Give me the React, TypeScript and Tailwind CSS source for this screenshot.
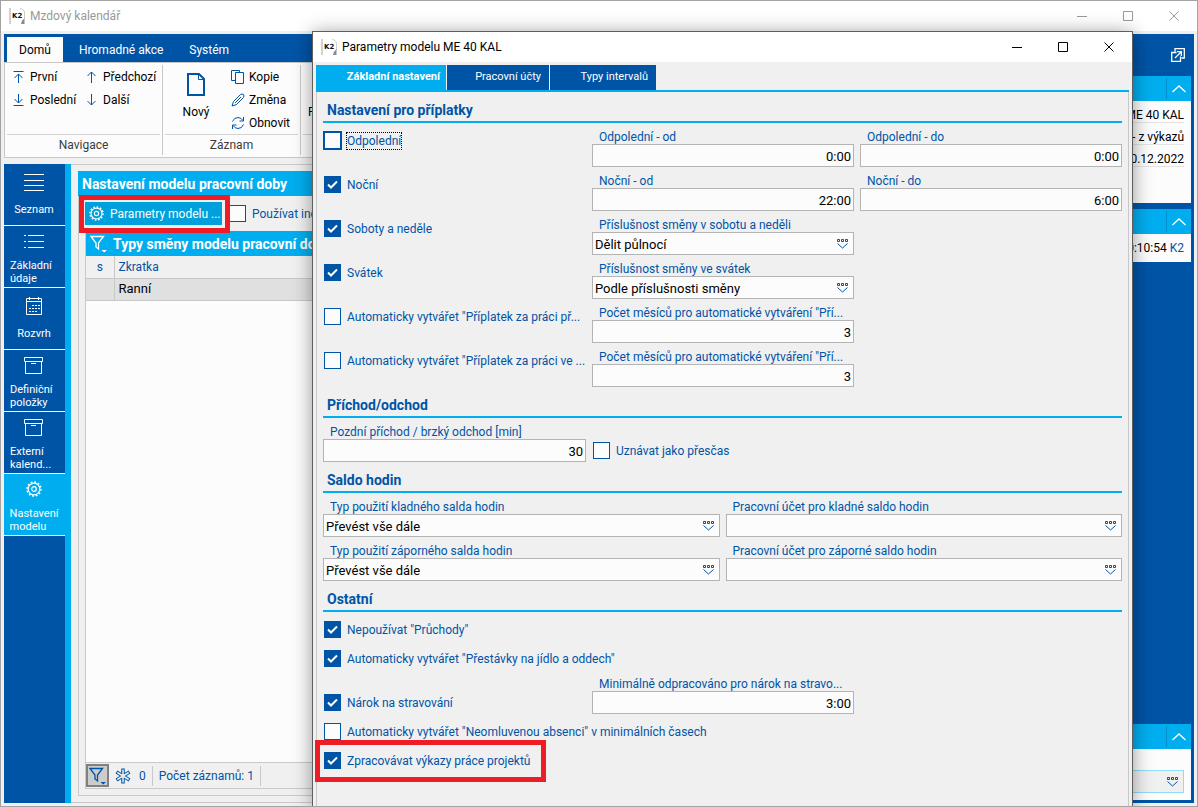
import { useId, useState } from "react";
import type { ReactNode } from "react";

export default function App() {
  return (
    <div className="relative flex min-h-screen flex-col overflow-hidden border border-[#a3a3a3] bg-[#f0f0f0] font-['Roboto','Noto_Sans',sans-serif] text-xs text-[#0054a6]">
      <TitleBar title="Mzdový kalendář" muted />
      <div className="flex flex-1 p-[3px]">
        <div className="flex min-w-0 flex-1 flex-col">
          <Ribbon />
          <div className="mt-1.5 flex flex-1">
            <Sidebar />
            <ModelPanel />
          </div>
        </div>
        <InfoColumn />
      </div>
      <ParametersDialog />
    </div>
  );
}

function TitleBar({ title, muted = false }: { title: string; muted?: boolean }) {
  return (
    <div
      className={`flex h-[30px] shrink-0 items-center bg-white pl-2 ${
        muted ? "text-[#999999]" : "text-black"
      }`}
    >
      <K2Logo />
      <span className="ml-1 flex-1">{title}</span>
      <button aria-label="Minimalizovat" className="flex w-[46px] justify-center">
        <WindowIcon d="M0 5.5H10" />
      </button>
      <button aria-label="Maximalizovat" className="flex w-[46px] justify-center">
        <WindowIcon d="M0.5 0.5H9.5V9.5H0.5Z" />
      </button>
      <button aria-label="Zavřít" className="flex w-[46px] justify-center">
        <WindowIcon d="M0.5 0.5L9.5 9.5M9.5 0.5L0.5 9.5" />
      </button>
    </div>
  );
}

function WindowIcon({ d }: { d: string }) {
  return (
    <svg width="10" height="10" viewBox="0 0 10 10" fill="none" stroke="currentColor">
      <path d={d} />
    </svg>
  );
}

function K2Logo() {
  return (
    <svg className="font-['DejaVu_Sans',sans-serif]" width="17" height="17" viewBox="0 0 17 17">
      <rect x="0" y="0" width="2" height="16" fill="#d2d2d2" />
      <path d="M11 0.5Q15.500 1 15.500 5V11" fill="none" stroke="#cccccc" />
      <path d="M15.500 10V16H12Q12 13 15.500 10Z" fill="#8a8a8a" />
      <text x="3" y="10" fontSize="7" fontWeight="700" fill="#111111">
        K2
      </text>
    </svg>
  );
}

function Ribbon() {
  return (
    <div>
      <div className="flex h-7 items-end bg-[#0054a6] pl-[3px] text-white">
        <button className="h-[25px] w-14 bg-[#fcfcfc] text-black">Domů</button>
        <button className="h-[25px] pr-3.5 pl-4">Hromadné akce</button>
        <button className="h-[25px] px-3">Systém</button>
      </div>
      <div className="flex h-[96px] border border-[#c8c8c8] bg-[#fcfcfc] py-0.5 text-black">
        <RibbonGroup title="Navigace" width="w-[158px]">
          <div className="grid grid-cols-[73px_1fr] content-start gap-y-[3px] pl-[5px]">
            <RibbonButton label="První" icon={<path d="M1.500 1.500H11.500M6.500 13V4M2.500 8L6.500 4L10.500 8" />} />
            <RibbonButton label="Předchozí" icon={<path d="M6.500 13V2M2.500 6L6.500 2L10.500 6" />} />
            <RibbonButton label="Poslední" icon={<path d="M1.500 12.500H11.500M6.500 1V10M2.500 6L6.500 10L10.500 6" />} />
            <RibbonButton label="Další" icon={<path d="M6.500 1V12M2.500 8L6.500 12L10.500 8" />} />
          </div>
        </RibbonGroup>
        <RibbonGroup title="Záznam" width="w-[138px]">
          <div className="flex gap-1">
            <button className="flex w-[62px] flex-col items-center gap-2 pt-1.5">
              <svg width="18" height="23" viewBox="0 0 18 23" fill="none" stroke="#0054a6" strokeWidth="2">
                <path d="M1 1H12L17 6V22H1Z" />
                <path d="M11.500 1V6.500H17" strokeWidth="1" />
              </svg>
              Nový
            </button>
            <div className="flex flex-col gap-[3px]">
              <RibbonButton
                label="Kopie"
                icon={<path d="M4.500 10.500H0.500V0.500H8.500V2.500M4.500 2.500H12.500V13.500H4.500Z" />}
              />
              <RibbonButton
                label="Změna"
                icon={
                  <path d="M1 13L2.500 8.500L9.500 1.500Q11 0.500 12.500 1.500Q13.500 3 12.500 4.500L5.500 11.500ZM4 10L10 4" />
                }
              />
              <RibbonButton
                label="Obnovit"
                icon={
                  <path d="M1.500 5.500Q3 1.500 7 1.500Q10 1.500 12 4.500M12.500 1V5H8.500M12.500 8.500Q11 12.500 7 12.500Q4 12.500 2 9.500M1.500 13V9H5.500" />
                }
              />
            </div>
          </div>
        </RibbonGroup>
        <RibbonGroup title="" width="w-[138px]">
          <span className="block pt-[37px] pl-[5px]">F</span>
        </RibbonGroup>
      </div>
    </div>
  );
}

function RibbonGroup({ title, width, children }: { title: string; width: string; children: ReactNode }) {
  return (
    <div className={`flex flex-col border-r border-[#c8c8c8] px-0.5 ${width}`}>
      <div className="h-[70px] border-b border-[#d4d4d4] pt-0.5">{children}</div>
      <div className="flex flex-1 items-center justify-center text-[#3c3c3c]">{title}</div>
    </div>
  );
}

function RibbonButton({ label, icon }: { label: string; icon: ReactNode }) {
  return (
    <button className="flex h-5 items-center gap-1 whitespace-nowrap">
      <svg width="14" height="14" viewBox="0 0 14 14" fill="none" stroke="#0054a6">
        {icon}
      </svg>
      {label}
    </button>
  );
}

const listIcon = <path d="M0 4.500H20M0 10.500H20M0 15.500H20M0 20.500H20" />;
const detailIcon = <path d="M0 3.500H2M4 3.500H20M0 9.500H2M4 9.500H20M0 15.500H2M4 15.500H20" />;
const calendarIcon = (
  <>
    <path d="M2.500 4.500H17.500V20.500H2.500ZM2.500 7.500H17.500M5.500 3V6M14.500 3V6" />
    <path d="M8 11.500H16M5 14.500H16M5 17.500H13" strokeDasharray="2 1" />
  </>
);
const boxIcon = <path d="M0.500 1.500H18.500V5.500H0.500ZM1.500 5.500V17.500H17.500V5.500M7 7.500H12" />;

const NAV_ITEMS = [
  { label: "Seznam", icon: listIcon },
  { label: "Základní údaje", icon: detailIcon },
  { label: "Rozvrh", icon: calendarIcon },
  { label: "Definiční položky", icon: boxIcon },
  { label: "Externí kalend...", icon: boxIcon },
];

function Sidebar() {
  return (
    <nav className="w-[67px] shrink-0 border-r-6 border-[#00aeef] bg-[#0054a6] text-white">
      {NAV_ITEMS.map((item) => (
        <NavButton key={item.label} label={item.label}>
          <svg
            className="overflow-visible"
            width="20"
            height="18"
            viewBox="0 0 20 18"
            fill="none"
            stroke="currentColor"
          >
            {item.icon}
          </svg>
        </NavButton>
      ))}
      <NavButton label="Nastavení modelu" active>
        <GearIcon size="size-4" />
      </NavButton>
    </nav>
  );
}

function NavButton({ label, active = false, children }: { label: string; active?: boolean; children: ReactNode }) {
  return (
    <button
      className={`flex h-[62px] w-full flex-col items-center border-b border-white pt-1.5 pr-px ${
        active ? "bg-[#00aeef]" : ""
      }`}
    >
      <span className="flex h-[18px] items-center">{children}</span>
      <span className="flex flex-1 items-center px-1.5 pt-1.5 text-left text-[11px] leading-[13px]">{label}</span>
    </button>
  );
}

function GearIcon({ size }: { size: string }) {
  return (
    <svg className={`shrink-0 ${size}`} viewBox="0 0 16 16" fill="none" stroke="currentColor">
      <circle cx="8" cy="8" r="7" strokeWidth="1.500" strokeDasharray="1.800 1.865" />
      <circle cx="8" cy="8" r="5.800" strokeWidth="1.200" />
      <circle cx="8" cy="8" r="2.300" strokeWidth="1.200" />
    </svg>
  );
}

function FunnelIcon() {
  return (
    <svg width="18" height="18" viewBox="0 0 18 18" fill="none" stroke="currentColor" strokeWidth="1.300">
      <path d="M1 1.500H13.500L8.500 8V14L6 12V8Z" />
      <path d="M11.500 15H17L14.200 17.500Z" fill="currentColor" stroke="none" />
    </svg>
  );
}

function ModelPanel() {
  return (
    <section className="flex min-w-0 flex-1 flex-col border-y border-[#c8c8c8] pt-1.5 pb-1.5 pl-[7px]">
      <h2 className="h-[25px] bg-[#00aeef] pl-1 text-sm leading-[26px] font-bold text-white">
        Nastavení modelu pracovní doby
      </h2>
      <div className="flex flex-1 flex-col border-b border-l border-[#c8c8c8] pb-1.5 pl-1.5">
        <div className="flex h-[35px] items-center gap-1.5">
          <div className="relative">
            <button className="flex h-[23px] w-[137px] items-center gap-1.5 bg-[#00a0dc] pl-1 whitespace-nowrap text-white">
              <GearIcon size="size-[15px]" />
              Parametry modelu ...
            </button>
            {/* red frame marks the button that opens the dialog */}
            <div className="pointer-events-none absolute -top-[7px] -left-1.5 z-10 h-[38px] w-[151px] border-5 border-[#ee1c25]" />
          </div>
          <CheckBox label="Používat individuální" />
        </div>
        <div className="flex flex-1 flex-col border-b border-l border-[#c8c8c8]">
          <h3 className="flex h-[25px] items-center gap-[5px] bg-[#00aeef] pl-1 text-sm font-bold text-white">
            <FunnelIcon />
            Typy směny modelu pracovní doby
          </h3>
          <div className="flex-1 bg-[#fcfcfc]">
            <table className="w-full border-collapse text-left">
              <thead>
                <tr className="h-[22px] border-b border-[#c8c8c8] bg-[#f0f0f0]">
                  <th className="w-7 border-r border-[#c8c8c8] text-center font-normal">s</th>
                  <th className="pl-1 font-normal">Zkratka</th>
                </tr>
              </thead>
              <tbody>
                <tr className="h-[22px] border-b border-[#c8c8c8] bg-[#e0e0e0] text-[13px] text-black">
                  <td className="border-r border-[#c8c8c8]" />
                  <td className="pl-1">Ranní</td>
                </tr>
              </tbody>
            </table>
          </div>
          <div className="flex h-[26px] items-center border-t border-[#c8c8c8]">
            <button
              aria-label="Filtr"
              className="grid size-[23px] place-items-center border-2 border-[#808080] bg-[#cccccc]"
            >
              <FunnelIcon />
            </button>
            <div className="flex h-5 items-center gap-2 border-r border-[#c8c8c8] px-1.5">
              <svg width="16" height="16" viewBox="0 0 16 16" fill="none" stroke="currentColor">
                <path d="M8 0.500V15.500M1.500 4L14.500 12M14.500 4L1.500 12" strokeWidth="3.500" />
                <path
                  d="M8 1.500V14.500M2.300 4.500L13.700 11.500M13.700 4.500L2.300 11.500"
                  stroke="#f0f0f0"
                  strokeWidth="1.500"
                />
              </svg>
              0
            </div>
            <span className="flex h-5 items-center border-r border-[#c8c8c8] px-1.5">Počet záznamů: 1</span>
          </div>
        </div>
      </div>
    </section>
  );
}

function InfoColumn() {
  return (
    <aside className="flex w-[240px] shrink-0 flex-col bg-[#0054a6] px-[3px] pb-[3px] text-black">
      <div className="flex h-[42px] items-center justify-end pr-1.5 text-white">
        <button aria-label="Otevřít v novém okně">
          <svg width="14" height="14" viewBox="0 0 14 14" fill="none" stroke="currentColor" strokeWidth="1.300">
            <path d="M4 3.500V0.700H13.300V10H10.500M5.500 4.500H0.700V13.300H9.500V8.500" />
            <path d="M4 10L10 4M6 3.700H10.300V8" />
          </svg>
        </button>
      </div>
      <InfoCard>
        <div className="h-[102px] pr-[7px] pl-2 text-right">
          <div className="h-[22px] border-b border-[#e4e4e4] leading-[29px]">ME 40 KAL</div>
          <div className="h-[22px] border-b border-[#e4e4e4] leading-[29px]">- z výkazů</div>
          <div className="h-[22px] border-b border-[#e4e4e4] leading-[29px]">30.12.2022</div>
        </div>
      </InfoCard>
      <div className="mt-1.5">
        <InfoCard>
          <div className="h-7 pr-[7px] text-right leading-7">
            0:10:54 <a href="#k2" className="text-[#0054a6]">K2</a>
          </div>
        </InfoCard>
      </div>
      <div className="mt-auto">
        <InfoCard>
          <div className="h-[51px] pt-[21px] pr-[7px] pl-2">
            <div className="relative h-[23px] border border-[#8fdcf8] bg-[#f0f0f0]">
              <select aria-label="Výběr" className="size-full appearance-none outline-none">
                <option value="" />
              </select>
              <DropIcon />
            </div>
          </div>
        </InfoCard>
      </div>
    </aside>
  );
}

function InfoCard({ children }: { children: ReactNode }) {
  return (
    <div className="bg-[#fcfcfc]">
      <div className="flex h-[25px] items-center justify-end bg-[#00aeef] text-white">
        <button aria-label="Sbalit" className="grid h-[21px] w-[25px] place-items-center border-l border-[#0090cc]">
          <svg width="14" height="8" viewBox="0 0 14 8" fill="none" stroke="currentColor" strokeWidth="1.300">
            <path d="M0.500 7L7 1L13.500 7" />
          </svg>
        </button>
      </div>
      {children}
    </div>
  );
}

function ParametersDialog() {
  return (
    <div
      role="dialog"
      aria-label="Parametry modelu ME 40 KAL"
      className="absolute top-[30px] right-16 bottom-0 left-[311px] z-20 flex flex-col border border-b-0 border-[#5e5e5e] bg-[#f0f0f0] shadow-[0_2px_18px_rgba(0,0,0,0.4)]"
    >
      <TitleBar title="Parametry modelu ME 40 KAL" />
      <div className="flex flex-1 flex-col px-[3px] pt-[3px]">
        <div className="flex gap-px border-b-2 border-[#00aeef] text-[11px] text-white">
          <button className="h-[25px] w-[130px] bg-[#00aeef] pr-1.5 text-right font-bold">Základní nastavení</button>
          <button className="h-[25px] w-[102px] bg-[#0054a6] pr-2 text-right">Pracovní účty</button>
          <button className="h-[25px] w-[106px] bg-[#0054a6] pr-2 text-right">Typy intervalů</button>
        </div>
        <form className="flex-1 border-x border-[#c8c8c8] px-1.5">
          <SurchargeSection />

          <SectionTitle>Příchod/odchod</SectionTitle>
          <FieldGrid>
            <TextField label="Pozdní příchod / brzký odchod [min]" value="30" />
            <div className="pt-6">
              <CheckBox label="Uznávat jako přesčas" />
            </div>
          </FieldGrid>

          <SectionTitle>Saldo hodin</SectionTitle>
          <div className="grid grid-cols-2 gap-x-1.5">
            <SelectField label="Typ použití kladného salda hodin" value="Převést vše dále" />
            <SelectField label="Pracovní účet pro kladné saldo hodin" value="" />
            <SelectField label="Typ použití záporného salda hodin" value="Převést vše dále" />
            <SelectField label="Pracovní účet pro záporné saldo hodin" value="" />
          </div>

          <SectionTitle>Ostatní</SectionTitle>
          <div className="h-[29px] pt-[9px]">
            <CheckBox label={'Nepoužívat "Průchody"'} checked />
          </div>
          <div className="h-[29px] pt-[9px]">
            <CheckBox label={'Automaticky vytvářet "Přestávky na jídlo a oddech"'} checked />
          </div>
          <FieldGrid>
            <div className="pt-6">
              <CheckBox label="Nárok na stravování" checked />
            </div>
            <TextField label="Minimálně odpracováno pro nárok na stravo..." value="3:00" />
          </FieldGrid>
          <div className="h-[29px] pt-[9px]">
            <CheckBox label={'Automaticky vytvářet "Neomluvenou absenci" v minimálních časech'} />
          </div>
          <div className="relative h-[29px] pt-[9px]">
            <CheckBox label="Zpracovávat výkazy práce projektů" checked />
            <div className="pointer-events-none absolute -top-[3px] -left-2 h-[42px] w-[231px] border-5 border-[#ee1c25]" />
          </div>
        </form>
      </div>
    </div>
  );
}

function SurchargeSection() {
  return (
    <>
      <SectionTitle>Nastavení pro příplatky</SectionTitle>
      <FieldGrid>
        <CheckCell label="Odpolední" focused />
        <TextField label="Odpolední - od" value="0:00" />
        <TextField label="Odpolední - do" value="0:00" />
        <CheckCell label="Noční" checked />
        <TextField label="Noční - od" value="22:00" />
        <TextField label="Noční - do" value="6:00" />
        <CheckCell label="Soboty a neděle" checked />
        <SelectField label="Příslušnost směny v sobotu a neděli" value="Dělit půlnocí" />
        <CheckCell label="Svátek" checked startRow />
        <SelectField label="Příslušnost směny ve svátek" value="Podle příslušnosti směny" />
        <CheckCell label={'Automaticky vytvářet "Příplatek za práci př...'} startRow />
        <TextField label={'Počet měsíců pro automatické vytváření "Pří...'} value="3" />
        <CheckCell label={'Automaticky vytvářet "Příplatek za práci ve ...'} startRow />
        <TextField label={'Počet měsíců pro automatické vytváření "Pří...'} value="3" />
      </FieldGrid>
    </>
  );
}

function FieldGrid({ children }: { children: ReactNode }) {
  return <div className="grid grid-cols-[263fr_262fr_262fr] gap-x-1.5">{children}</div>;
}

function SectionTitle({ children }: { children: ReactNode }) {
  return (
    <h3 className="h-[31px] border-b-2 border-[#00aeef] pl-1 text-sm leading-[37px] font-bold">{children}</h3>
  );
}

interface CheckProps {
  label: string;
  checked?: boolean;
  focused?: boolean;
}

function CheckCell({ startRow = false, ...props }: CheckProps & { startRow?: boolean }) {
  return (
    <div className={`pt-[9px] ${startRow ? "col-start-1" : ""}`}>
      <CheckBox {...props} />
    </div>
  );
}

function CheckBox({ label, checked = false, focused = false }: CheckProps) {
  const [on, setOn] = useState(checked);
  return (
    <label className="flex h-[17px] items-center gap-[5px] whitespace-nowrap">
      <span className="grid w-[19px] shrink-0 place-items-center">
        <input
          type="checkbox"
          checked={on}
          onChange={() => setOn(!on)}
          className={`col-start-1 row-start-1 appearance-none border-[#0054a6] bg-[#fcfcfc] checked:bg-[#0054a6] ${
            focused ? "size-[19px] border-2" : "size-[17px] border"
          }`}
        />
        {on && (
          <svg
            className="pointer-events-none col-start-1 row-start-1"
            width="11"
            height="9"
            viewBox="0 0 11 9"
            fill="none"
            stroke="white"
            strokeWidth="2"
          >
            <path d="M1 4.500L4 7.500L10 1.500" />
          </svg>
        )}
      </span>
      <span className={focused ? "outline-1 outline-black outline-dotted" : ""}>{label}</span>
    </label>
  );
}

function TextField({ label, value }: { label: string; value: string }) {
  const id = useId();
  return (
    <div className="flex min-w-0 flex-col">
      <label htmlFor={id} className="h-[21px] pl-[7px] leading-[29px] whitespace-nowrap">
        {label}
      </label>
      <input
        id={id}
        defaultValue={value}
        className="h-[23px] w-full border border-[#b4b4b4] bg-[#fcfcfc] px-0.5 pt-0.5 text-right text-[13px] text-black outline-none"
      />
    </div>
  );
}

function SelectField({ label, value }: { label: string; value: string }) {
  const id = useId();
  return (
    <div className="flex min-w-0 flex-col">
      <label htmlFor={id} className="h-[21px] pl-[7px] leading-[29px] whitespace-nowrap">
        {label}
      </label>
      <div className="relative h-[23px] border border-[#b4b4b4] bg-[#fcfcfc]">
        <select id={id} className="size-full appearance-none px-0.5 pt-0.5 text-[13px] text-black outline-none">
          <option>{value}</option>
        </select>
        <DropIcon />
      </div>
    </div>
  );
}

function DropIcon() {
  return (
    <svg
      className="pointer-events-none absolute top-1.5 right-1"
      width="12"
      height="10"
      viewBox="0 0 12 10"
      fill="none"
      stroke="#0054a6"
    >
      <path d="M0.500 0.500H2.500V2.500H0.500ZM4.500 0.500H6.500V2.500H4.500ZM8.500 0.500H10.500V2.500H8.500Z" />
      <path d="M0.500 4.500L5.500 9L10.500 4.500" />
    </svg>
  );
}
